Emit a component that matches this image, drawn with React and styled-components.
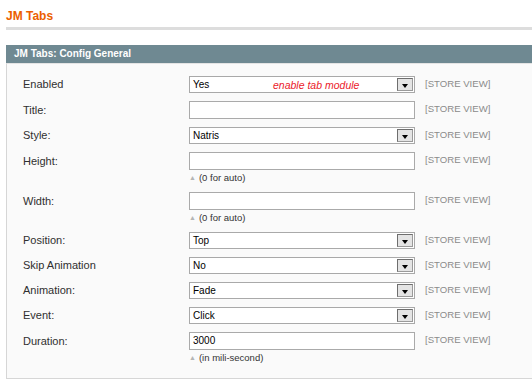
import styled, { createGlobalStyle } from 'styled-components';

const GlobalStyle = createGlobalStyle`
  body {
    margin: 0;
    background: #fff;
    font-family: 'Liberation Sans', Arial, sans-serif;
    overflow: hidden;
  }
`;

const fields = [
  { label: 'Enabled', type: 'select', value: 'Yes', comment: 'enable tab module' },
  { label: 'Title:', type: 'input', value: '' },
  { label: 'Style:', type: 'select', value: 'Natris' },
  { label: 'Height:', type: 'input', value: '', note: '(0 for auto)' },
  { label: 'Width:', type: 'input', value: '', note: '(0 for auto)' },
  { label: 'Position:', type: 'select', value: 'Top' },
  { label: 'Skip Animation', type: 'select', value: 'No' },
  { label: 'Animation:', type: 'select', value: 'Fade' },
  { label: 'Event:', type: 'select', value: 'Click' },
  { label: 'Duration:', type: 'input', value: '3000', note: '(in mili-second)' },
];

const App = () => {
  return (
    <>
      <GlobalStyle />
      <Page>
        <PageTitle>JM Tabs</PageTitle>
        <SectionHead>JM Tabs: Config General</SectionHead>
        <Fieldset>
          {fields.map((f) => (
            <Row key={f.label}>
              <Label $tall={f.type === 'input'}>{f.label}</Label>
              <Value>
                {f.type === 'select' ? (
                  <SelectBox>
                    <span>{f.value}</span>
                    {f.comment && <Comment>{f.comment}</Comment>}
                    <Arrow />
                  </SelectBox>
                ) : (
                  <TextBox>{f.value}</TextBox>
                )}
                {f.note && (
                  <Note>
                    <NoteMark>▲</NoteMark>
                    {f.note}
                  </Note>
                )}
              </Value>
              <Scope $tall={f.type === 'input'}>[STORE VIEW]</Scope>
            </Row>
          ))}
        </Fieldset>
      </Page>
    </>
  );
};

const Page = styled.div`
  padding: 9px 0 0 6px;
`;

const PageTitle = styled.h3`
  margin: 0;
  padding-bottom: 3px;
  border-bottom: 3px solid #dddddd;
  font-size: 12px;
  line-height: 15px;
  font-weight: bold;
  color: #eb5e00;
`;

const SectionHead = styled.div`
  margin-top: 15px;
  height: 18px;
  padding-left: 8px;
  background: #6f8992;
  color: #fff;
  font-size: 10px;
  font-weight: bold;
  line-height: 18px;
`;

const Fieldset = styled.div`
  background: #fafafa;
  border: 1px solid #d6d6d6;
  border-top-color: #e4e4e4;
  border-right: none;
  padding: 8px 0 10px 16px;
`;

const Row = styled.div`
  display: grid;
  grid-template-columns: 156px 226px 1fr;
  column-gap: 10px;
  align-items: start;
  padding: 4px 0;
`;

const Label = styled.div`
  font-size: 11px;
  color: #2f2f2f;
  line-height: ${(p) => (p.$tall ? '18px' : '17px')};
`;

const Value = styled.div`
  display: flex;
  flex-direction: column;
`;

const SelectBox = styled.div`
  position: relative;
  box-sizing: border-box;
  height: 17px;
  border: 1px solid #a9a9a9;
  background: #fff;
  padding: 0 0 0 3px;
  font-size: 10px;
  line-height: 15px;
  color: #000;
`;

const Comment = styled.span`
  position: absolute;
  left: 83px;
  top: 1px;
  font-size: 10.5px;
  font-style: italic;
  color: #eb1a2a;
`;

const Arrow = styled.span`
  position: absolute;
  right: 1px;
  top: 1px;
  box-sizing: border-box;
  width: 16px;
  height: 13px;
  background: #e4e4e4;
  border: 1px solid #6e6e6e;
  border-right-color: #9a9a9a;
  border-bottom-color: #9a9a9a;
  &::after {
    content: '';
    position: absolute;
    left: 4px;
    top: 5px;
    border-left: 3.5px solid transparent;
    border-right: 3.5px solid transparent;
    border-top: 4px solid #000;
  }
`;

const TextBox = styled.div`
  box-sizing: border-box;
  height: 18px;
  border: 1px solid #aaaaaa;
  background: #fff;
  padding-left: 3px;
  font-size: 10px;
  line-height: 16px;
  color: #000;
`;

const Note = styled.div`
  margin-top: 2px;
  font-size: 9.5px;
  line-height: 12px;
  color: #333;
`;

const NoteMark = styled.span`
  font-size: 7px;
  color: #b5b5b5;
  margin-right: 3px;
  vertical-align: 1px;
`;

const Scope = styled.div`
  font-size: 9.6px;
  color: #8a8a8a;
  line-height: ${(p) => (p.$tall ? '16px' : '15px')};
`;

export default App;
